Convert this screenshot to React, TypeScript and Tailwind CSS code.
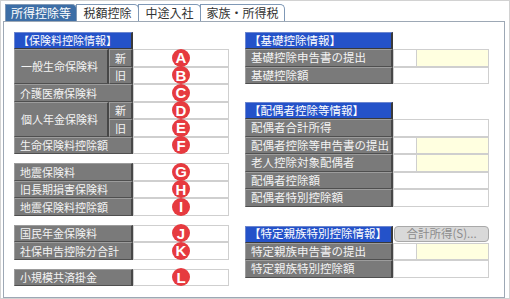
import React from "react";

const font = "font-['Noto_Sans_CJK_JP','Liberation_Sans',sans-serif]";

const labelCls =
  "flex items-center bg-[#7a7a7a] text-[#f3f3f3] border-t border-l border-b border-r-2 border-t-[#9c9c9c] border-l-[#9c9c9c] border-r-[#474747] border-b-[#4f4f4f] whitespace-nowrap";

const headCls =
  "flex items-center h-[17px] bg-[#2452c9] text-white border border-r-2 border-t-[#6c86cf] border-l-[#6c86cf] border-r-[#3a3a3a] border-b-[#3a3a3a] whitespace-nowrap";

const tabs = [
  { name: "所得控除等", w: "w-[72px]", active: true },
  { name: "税額控除", w: "w-[63px]" },
  { name: "中途入社", w: "w-[63px]" },
  { name: "家族・所得税", w: "w-[85px]" },
];

function Badge({ letter }: { letter: string }) {
  return (
    <span className="absolute left-[38px] top-1/2 -translate-y-1/2 z-10 flex h-[18px] w-[18px] items-center justify-center rounded-full bg-[#e63a3f] text-[15px] font-bold leading-none text-white font-['Liberation_Sans',sans-serif]">
      {letter}
    </span>
  );
}

function Field({ badge, yellow }: { badge?: string; yellow?: boolean }) {
  return (
    <div className="relative flex h-full w-[96px] border border-[#cfcfcf] bg-white">
      {yellow && (
        <>
          <div className="w-[23px] border-r border-[#cfcfcf]" />
          <div className="flex-1 bg-[#ffffe0]" />
        </>
      )}
      {badge && <Badge letter={badge} />}
    </div>
  );
}

function LeftRow({ label, badge }: { label: string; badge: string }) {
  return (
    <div className="flex h-[17.5px]">
      <div className={`${labelCls} w-[119px] pl-[5px]`}>{label}</div>
      <Field badge={badge} />
    </div>
  );
}

function SplitRow({ label, badges }: { label: string; badges: [string, string] }) {
  return (
    <div className="flex h-[35px]">
      <div className={`${labelCls} w-[95px] pl-[6px]`}>{label}</div>
      <div className="flex flex-col">
        {["新", "旧"].map((s, i) => (
          <div key={s} className="flex h-[17.5px]">
            <div className={`${labelCls} w-[24px] justify-center`}>{s}</div>
            <Field badge={badges[i]} />
          </div>
        ))}
      </div>
    </div>
  );
}

function RightRow({ label, yellow }: { label: string; yellow?: boolean }) {
  return (
    <div className="flex h-[17.5px]">
      <div className={`${labelCls} w-[148px] pl-[5px] text-[11.5px]`}>{label}</div>
      <Field yellow={yellow} />
    </div>
  );
}

export default function App() {
  return (
    <div className={`${font} w-[510px] h-[299px] overflow-hidden border border-[#d2d2d2] bg-white pt-[3px] pl-[2px] pr-[4px] text-[11px]`}>
      <div className="ml-[2px] flex h-[17px]">
        {tabs.map((t) => (
          <div
            key={t.name}
            className={`${t.w} flex items-center justify-center rounded-tr-[5px] border border-b-0 border-[#7f98b6] text-[12px] ${
              t.active ? "bg-[#3d6ea6] text-white" : "bg-white text-[#333]"
            } -ml-px first:ml-0`}
          >
            {t.name}
          </div>
        ))}
      </div>
      <div className="flex h-[277px] gap-[16px] border border-[#9da8b5] pl-[10px] pt-[10px]">
        {/* left column */}
        <div className="flex w-[215px] flex-col">
          <div className={`${headCls} w-[119px] pl-[3px]`}>【保険料控除情報】</div>
          <SplitRow label="一般生命保険料" badges={["A", "B"]} />
          <LeftRow label="介護医療保険料" badge="C" />
          <SplitRow label="個人年金保険料" badges={["D", "E"]} />
          <LeftRow label="生命保険料控除額" badge="F" />
          <div className="mt-[9px]">
            <LeftRow label="地震保険料" badge="G" />
            <LeftRow label="旧長期損害保険料" badge="H" />
            <LeftRow label="地震保険料控除額" badge="I" />
          </div>
          <div className="mt-[9px]">
            <LeftRow label="国民年金保険料" badge="J" />
            <LeftRow label="社保申告控除分合計" badge="K" />
          </div>
          <div className="mt-[9px]">
            <LeftRow label="小規模共済掛金" badge="L" />
          </div>
        </div>

        {/* right column */}
        <div className="flex w-[244px] flex-col">
          <div className={`${headCls} w-[148px] pl-[3px] text-[11.5px]`}>【基礎控除情報】</div>
          <RightRow label="基礎控除申告書の提出" yellow />
          <RightRow label="基礎控除額" />

          <div className={`${headCls} mt-[18px] w-[148px] pl-[3px] text-[11.5px]`}>【配偶者控除等情報】</div>
          <RightRow label="配偶者合計所得" />
          <RightRow label="配偶者控除等申告書の提出" yellow />
          <RightRow label="老人控除対象配偶者" yellow />
          <RightRow label="配偶者控除額" />
          <RightRow label="配偶者特別控除額" />

          <div className="mt-[19px] flex h-[17px]">
            <div className={`${headCls} w-[148px] pl-[3px] text-[11.5px]`}>【特定親族特別控除情報】</div>
            <button className="ml-px flex h-[16px] w-[95px] items-center justify-center rounded-[4px] border border-[#a9a9a9] bg-[#d9d9d9] text-[11.5px] text-[#8c8c8c]">
              合計所得(S)...
            </button>
          </div>
          <RightRow label="特定親族申告書の提出" yellow />
          <RightRow label="特定親族特別控除額" />
        </div>
      </div>
    </div>
  );
}
